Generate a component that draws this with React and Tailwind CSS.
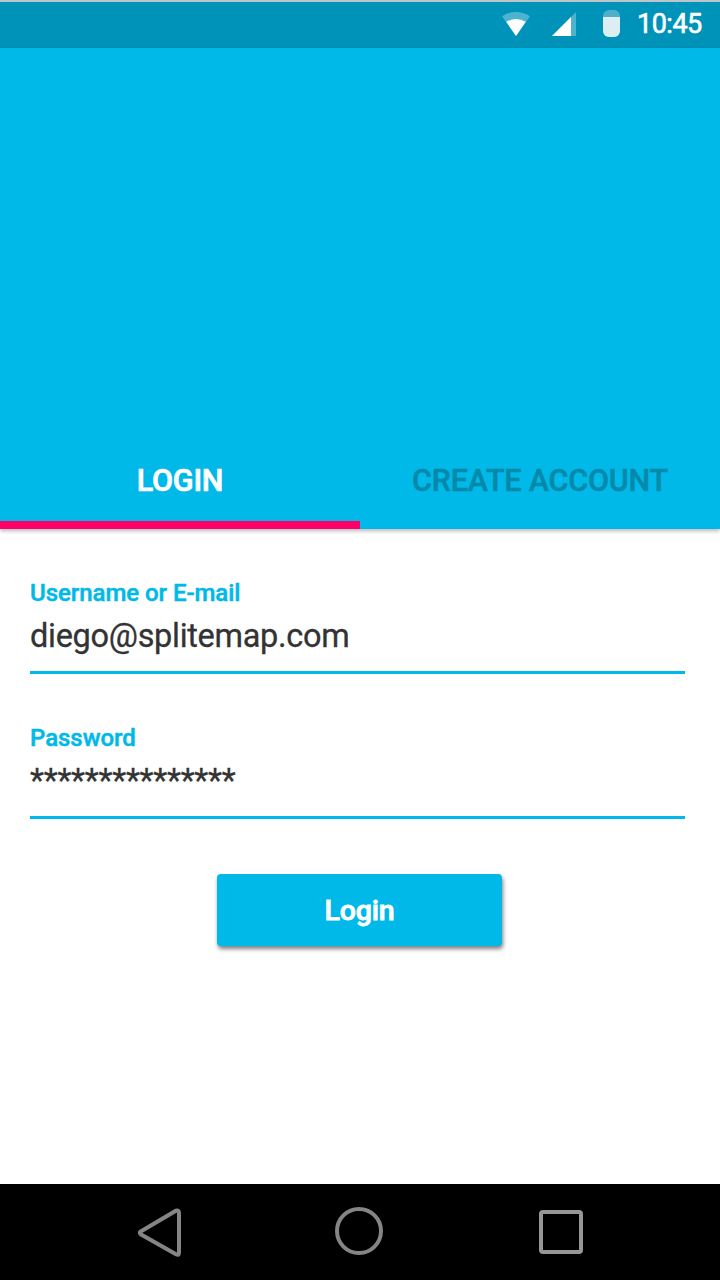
function StatusBar() {
  return (
    <header className="flex h-12 items-start border-t-2 border-[#bcc5c8] bg-[#0093b9] pl-[502px] text-white">
      <svg className="mt-[10px] h-6 w-7 shrink-0" viewBox="0 0 28 24">
        <path d="M0 4.2Q14-4.2 28 4.2L14 24Z" fill="#4db3cf" />
        <path d="M4.2 9.8Q14 4.4 23.8 9.8L14 24Z" fill="#fff" />
      </svg>
      <svg className="mt-[10px] ml-[22px] h-6 w-6 shrink-0" viewBox="0 0 24 24">
        <path d="M0 24 24 0V24Z" fill="#4db3cf" />
        <path d="M0 24 19 5V24Z" fill="#fff" />
      </svg>
      <div className="mt-2 ml-[27px] h-[27px] w-[17px] shrink-0 overflow-hidden rounded-[6px] bg-[#4dafc9] pt-[7px]">
        <div className="h-5 bg-[#dceef3]" />
      </div>
      <span className="ml-[17px] text-[27px] leading-[44px] tracking-[-0.5px] whitespace-nowrap [-webkit-text-stroke:0.6px]">10:45</span>
    </header>
  );
}

function Tabs() {
  return (
    <nav className="flex h-[97px] text-center text-[30.5px] font-medium tracking-[-0.2px]">
      <button className="w-1/2 border-b-8 border-[#ff006a] pt-px leading-[96px] text-white [-webkit-text-stroke:0.7px]">LOGIN</button>
      <button className="w-1/2 pt-px pb-2 leading-[96px] text-[#0489aa] [-webkit-text-stroke:0.5px]">CREATE ACCOUNT</button>
    </nav>
  );
}

function Field({ label, value }) {
  return (
    <div className="flex h-[100px] w-[655px] flex-col border-b-[3px] border-[#00b9e8]">
      <label className="mt-1 h-[30px] text-[24px] leading-[30px] font-medium tracking-[-0.05px] text-[#00b9e8] [-webkit-text-stroke:0.5px]">{label}</label>
      <span className="mt-2 text-[32.5px] leading-[41px] tracking-[-0.3px] text-[#333] [-webkit-text-stroke:0.3px]">{value}</span>
    </div>
  );
}

export default function App() {
  return (
    <div className="flex h-[1280px] w-[720px] flex-col overflow-hidden bg-white font-['Roboto',sans-serif]">
      <StatusBar />
      <section className="flex h-[481px] shrink-0 flex-col justify-end bg-[#00b9e8] shadow-[0_2px_4px_rgba(0,0,0,0.28)]">
        <Tabs />
      </section>
      <main className="flex flex-1 flex-col pt-[45px] pl-[30px]">
        <Field label="Username or E-mail" value="diego@splitemap.com" />
        <div className="mt-[45px]">
          <Field label="Password" value="***************" />
        </div>
        <button className="mt-[55px] ml-[187px] h-[72px] w-[285px] rounded-[4px] bg-[#00b9e8] pt-0.5 text-[28.5px] font-medium tracking-[-0.2px] text-white shadow-[1px_3px_4px_rgba(0,0,0,0.5)] [-webkit-text-stroke:0.8px]">
          Login
        </button>
      </main>
      <footer className="flex h-24 shrink-0 items-start bg-black">
        <svg className="mt-[23px] ml-[136px] h-[52px] w-[47px]" viewBox="0 0 47 52" fill="none" stroke="#858585" strokeWidth="4">
          <path d="M4.7 24.4 40 3.7Q43 2.7 43 6V45.5Q43 49 40 47.3L4.7 27.2Q2.8 25.8 4.7 24.4Z" />
        </svg>
        <div className="mt-[23px] ml-[152px] size-12 rounded-full border-4 border-[#858585]" />
        <div className="mt-[26px] ml-[156px] size-11 rounded-[4px] border-4 border-[#969696]" />
      </footer>
    </div>
  );
}
